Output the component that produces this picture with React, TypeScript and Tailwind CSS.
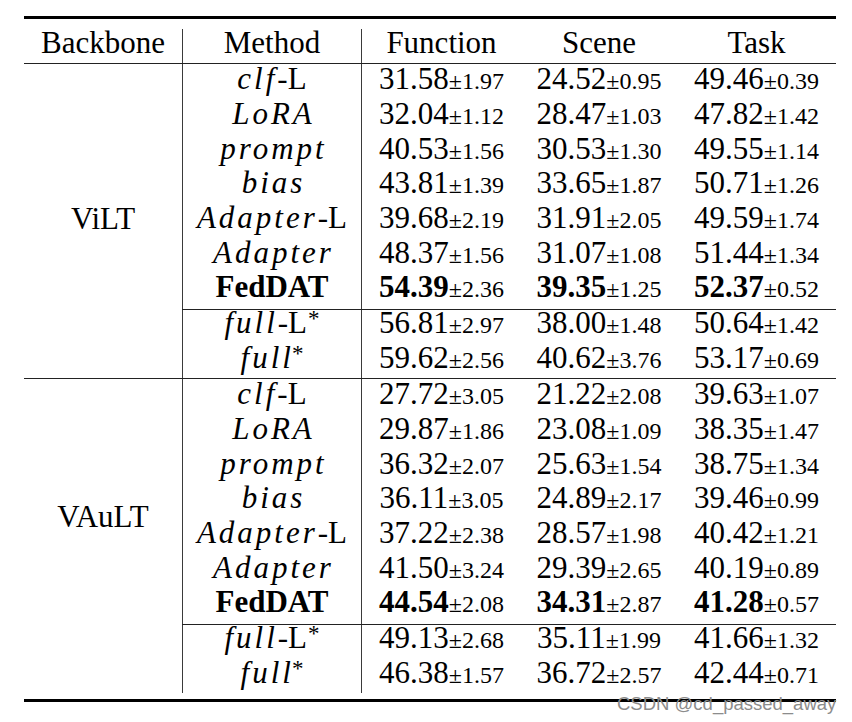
type Val = [string, string]
type Row = { it?: string; rm?: string; star?: boolean; bold?: boolean; vals: Val[] }

const upperHeights = ['h-[35px]', 'h-[35px]', 'h-[34px]', 'h-[35px]', 'h-[35px]', 'h-[34px]', 'h-[37px]']
const lowerHeights = ['h-[35px]', 'h-[33px]']

const blocks: { name: string; pad: string; rows: Row[] }[] = [
  {
    name: 'ViLT',
    pad: 'pt-[140px]',
    rows: [
      { it: 'clf', rm: '-L', vals: [['31.58', '1.97'], ['24.52', '0.95'], ['49.46', '0.39']] },
      { it: 'LoRA', vals: [['32.04', '1.12'], ['28.47', '1.03'], ['47.82', '1.42']] },
      { it: 'prompt', vals: [['40.53', '1.56'], ['30.53', '1.30'], ['49.55', '1.14']] },
      { it: 'bias', vals: [['43.81', '1.39'], ['33.65', '1.87'], ['50.71', '1.26']] },
      { it: 'Adapter', rm: '-L', vals: [['39.68', '2.19'], ['31.91', '2.05'], ['49.59', '1.74']] },
      { it: 'Adapter', vals: [['48.37', '1.56'], ['31.07', '1.08'], ['51.44', '1.34']] },
      { rm: 'FedDAT', bold: true, vals: [['54.39', '2.36'], ['39.35', '1.25'], ['52.37', '0.52']] },
      { it: 'full', rm: '-L', star: true, vals: [['56.81', '2.97'], ['38.00', '1.48'], ['50.64', '1.42']] },
      { it: 'full', star: true, vals: [['59.62', '2.56'], ['40.62', '3.76'], ['53.17', '0.69']] },
    ],
  },
  {
    name: 'VAuLT',
    pad: 'pt-[123px]',
    rows: [
      { it: 'clf', rm: '-L', vals: [['27.72', '3.05'], ['21.22', '2.08'], ['39.63', '1.07']] },
      { it: 'LoRA', vals: [['29.87', '1.86'], ['23.08', '1.09'], ['38.35', '1.47']] },
      { it: 'prompt', vals: [['36.32', '2.07'], ['25.63', '1.54'], ['38.75', '1.34']] },
      { it: 'bias', vals: [['36.11', '3.05'], ['24.89', '2.17'], ['39.46', '0.99']] },
      { it: 'Adapter', rm: '-L', vals: [['37.22', '2.38'], ['28.57', '1.98'], ['40.42', '1.21']] },
      { it: 'Adapter', vals: [['41.50', '3.24'], ['29.39', '2.65'], ['40.19', '0.89']] },
      { rm: 'FedDAT', bold: true, vals: [['44.54', '2.08'], ['34.31', '2.87'], ['41.28', '0.57']] },
      { it: 'full', rm: '-L', star: true, vals: [['49.13', '2.68'], ['35.11', '1.99'], ['41.66', '1.32']] },
      { it: 'full', star: true, vals: [['46.38', '1.57'], ['36.72', '2.57'], ['42.44', '0.71']] },
    ],
  },
]

function Method({ r }: { r: Row }) {
  if (r.bold) return <span className="font-bold">{r.rm}</span>
  return (
    <span className="whitespace-nowrap">
      <span className="italic tracking-[3px] mr-[-3px]">{r.it}</span>
      {r.rm && <span className="ml-[3px]">{r.rm}</span>}
      {r.star && <span className="relative -top-[7px] ml-[1px] text-[23px] leading-none">*</span>}
    </span>
  )
}

function DataRow({ r, h, lead }: { r: Row; h: string; lead: string }) {
  return (
    <div className={`grid grid-cols-[179px_160px_156px_159px] ${h} ${lead}`}>
      <div className="border-l border-[#3a3a3a] text-center">
        <Method r={r} />
      </div>
      {r.vals.map((v, i) => (
        <div key={i} className={`text-center whitespace-nowrap ${i === 0 ? 'border-l border-[#3a3a3a]' : ''}`}>
          <span className={r.bold ? 'font-bold' : ''}>{v[0]}</span>
          <span className="text-[24px] leading-none">±{v[1]}</span>
        </div>
      ))}
    </div>
  )
}

export default function App() {
  return (
    <div className="relative w-[852px] h-[722px] bg-white text-black font-['Liberation_Serif',serif] text-[31px]">
      <div className="ml-[24px] w-[812px] pt-[16px]">
        <div className="h-[3px] bg-black" />

        <div className="pt-[10px]">
          <div className="grid grid-cols-[158px_179px_160px_156px_159px] h-[34px] leading-[27px] text-center">
            <div>Backbone</div>
            <div className="border-l border-[#3a3a3a]">Method</div>
            <div className="border-l border-[#3a3a3a]">Function</div>
            <div>Scene</div>
            <div>Task</div>
          </div>
        </div>
        <div className="h-px bg-[#222]" />

        {blocks.map((b, bi) => (
          <div key={b.name}>
            <div className="flex">
              <div className={`w-[158px] text-center leading-[29px] ${b.pad}`}>{b.name}</div>
              <div className="w-[654px]">
                {b.rows.slice(0, 7).map((r, i) => (
                  <DataRow key={i} r={r} h={upperHeights[i]} lead="leading-[29px]" />
                ))}
                <div className="h-px bg-[#222]" />
                {b.rows.slice(7).map((r, i) => (
                  <DataRow key={i} r={r} h={lowerHeights[i]} lead="leading-[25px]" />
                ))}
              </div>
            </div>
            {bi === 0 && <div className="h-px bg-[#222]" />}
          </div>
        ))}

        <div className="mt-[6px] h-[3px] bg-black" />
      </div>

      <div className="absolute left-[617px] top-[695px] font-['Liberation_Sans',sans-serif] text-[18.5px] leading-[18px] text-[#8c8c8c] whitespace-nowrap">
        CSDN @cd_passed_away
      </div>
    </div>
  )
}
